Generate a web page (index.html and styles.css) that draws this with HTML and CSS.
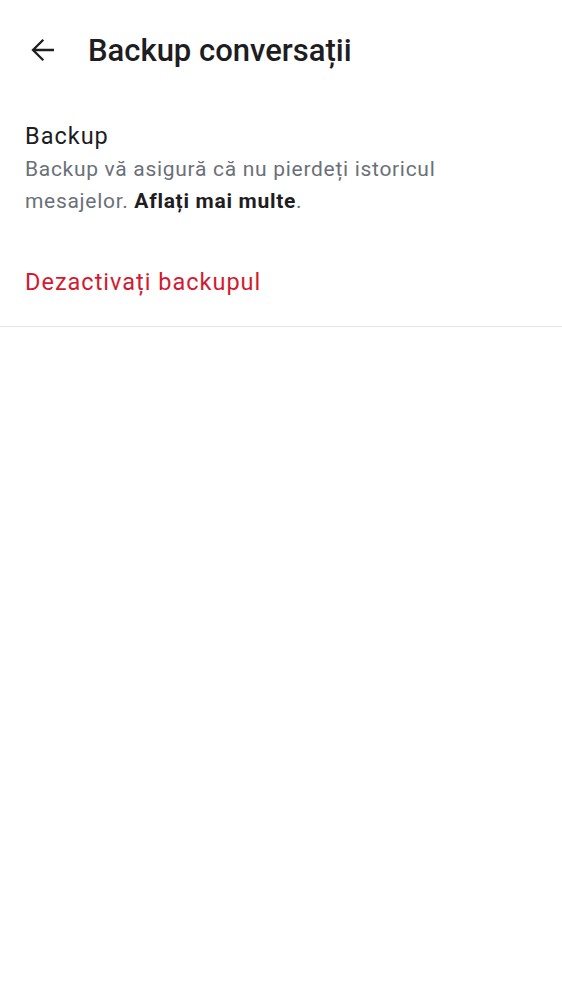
FILE: index.html
```html
<!DOCTYPE html>
<html lang="ro">
<head>
<meta charset="utf-8">
<link rel="stylesheet" href="styles.css">
</head>
<body>
<header class="topbar">
  <svg class="back" viewBox="0 0 24 24" width="24" height="24"><path d="M23 12H2M12.3 1.7L2 12l10.3 10.3" fill="none" stroke="#1d1d22" stroke-width="2.3"/></svg>
  <h1 class="title">Backup conversații</h1>
</header>
<section class="content">
  <div class="item">
    <div class="item-title">Backup</div>
    <div class="item-desc">Backup vă asigură că nu pierdeți istoricul mesajelor. <b>Aflați mai multe</b>.</div>
  </div>
  <div class="action">Dezactivați backupul</div>
</section>
</body>
</html>
```
FILE: styles.css
```css
html, body { margin: 0; padding: 0; background: #fff; }
body { font-family: Roboto, "Noto Sans", sans-serif; color: #1d1d22; }
.topbar { display: flex; align-items: center; height: 100px; padding-left: 31px; }
.back { display: block; margin-right: 33px; }
.title { margin: 0; font-size: 31px; font-weight: 500; letter-spacing: 0; color: #1d1d22; }
.content { border-bottom: 1px solid #e6e6e8; }
.item { padding: 19px 25px 0 25px; }
.item-title { font-size: 23.5px; line-height: 34px; letter-spacing: 1px; }
.item-desc { font-size: 21px; line-height: 32px; color: #6b7078; letter-spacing: 0.7px; max-width: 440px; }
.item-desc b { color: #1d1d22; font-weight: 700; }
.action { padding: 48px 25px 27px; font-size: 23.5px; line-height: 34px; letter-spacing: 1px; color: #d41a30; }
```
